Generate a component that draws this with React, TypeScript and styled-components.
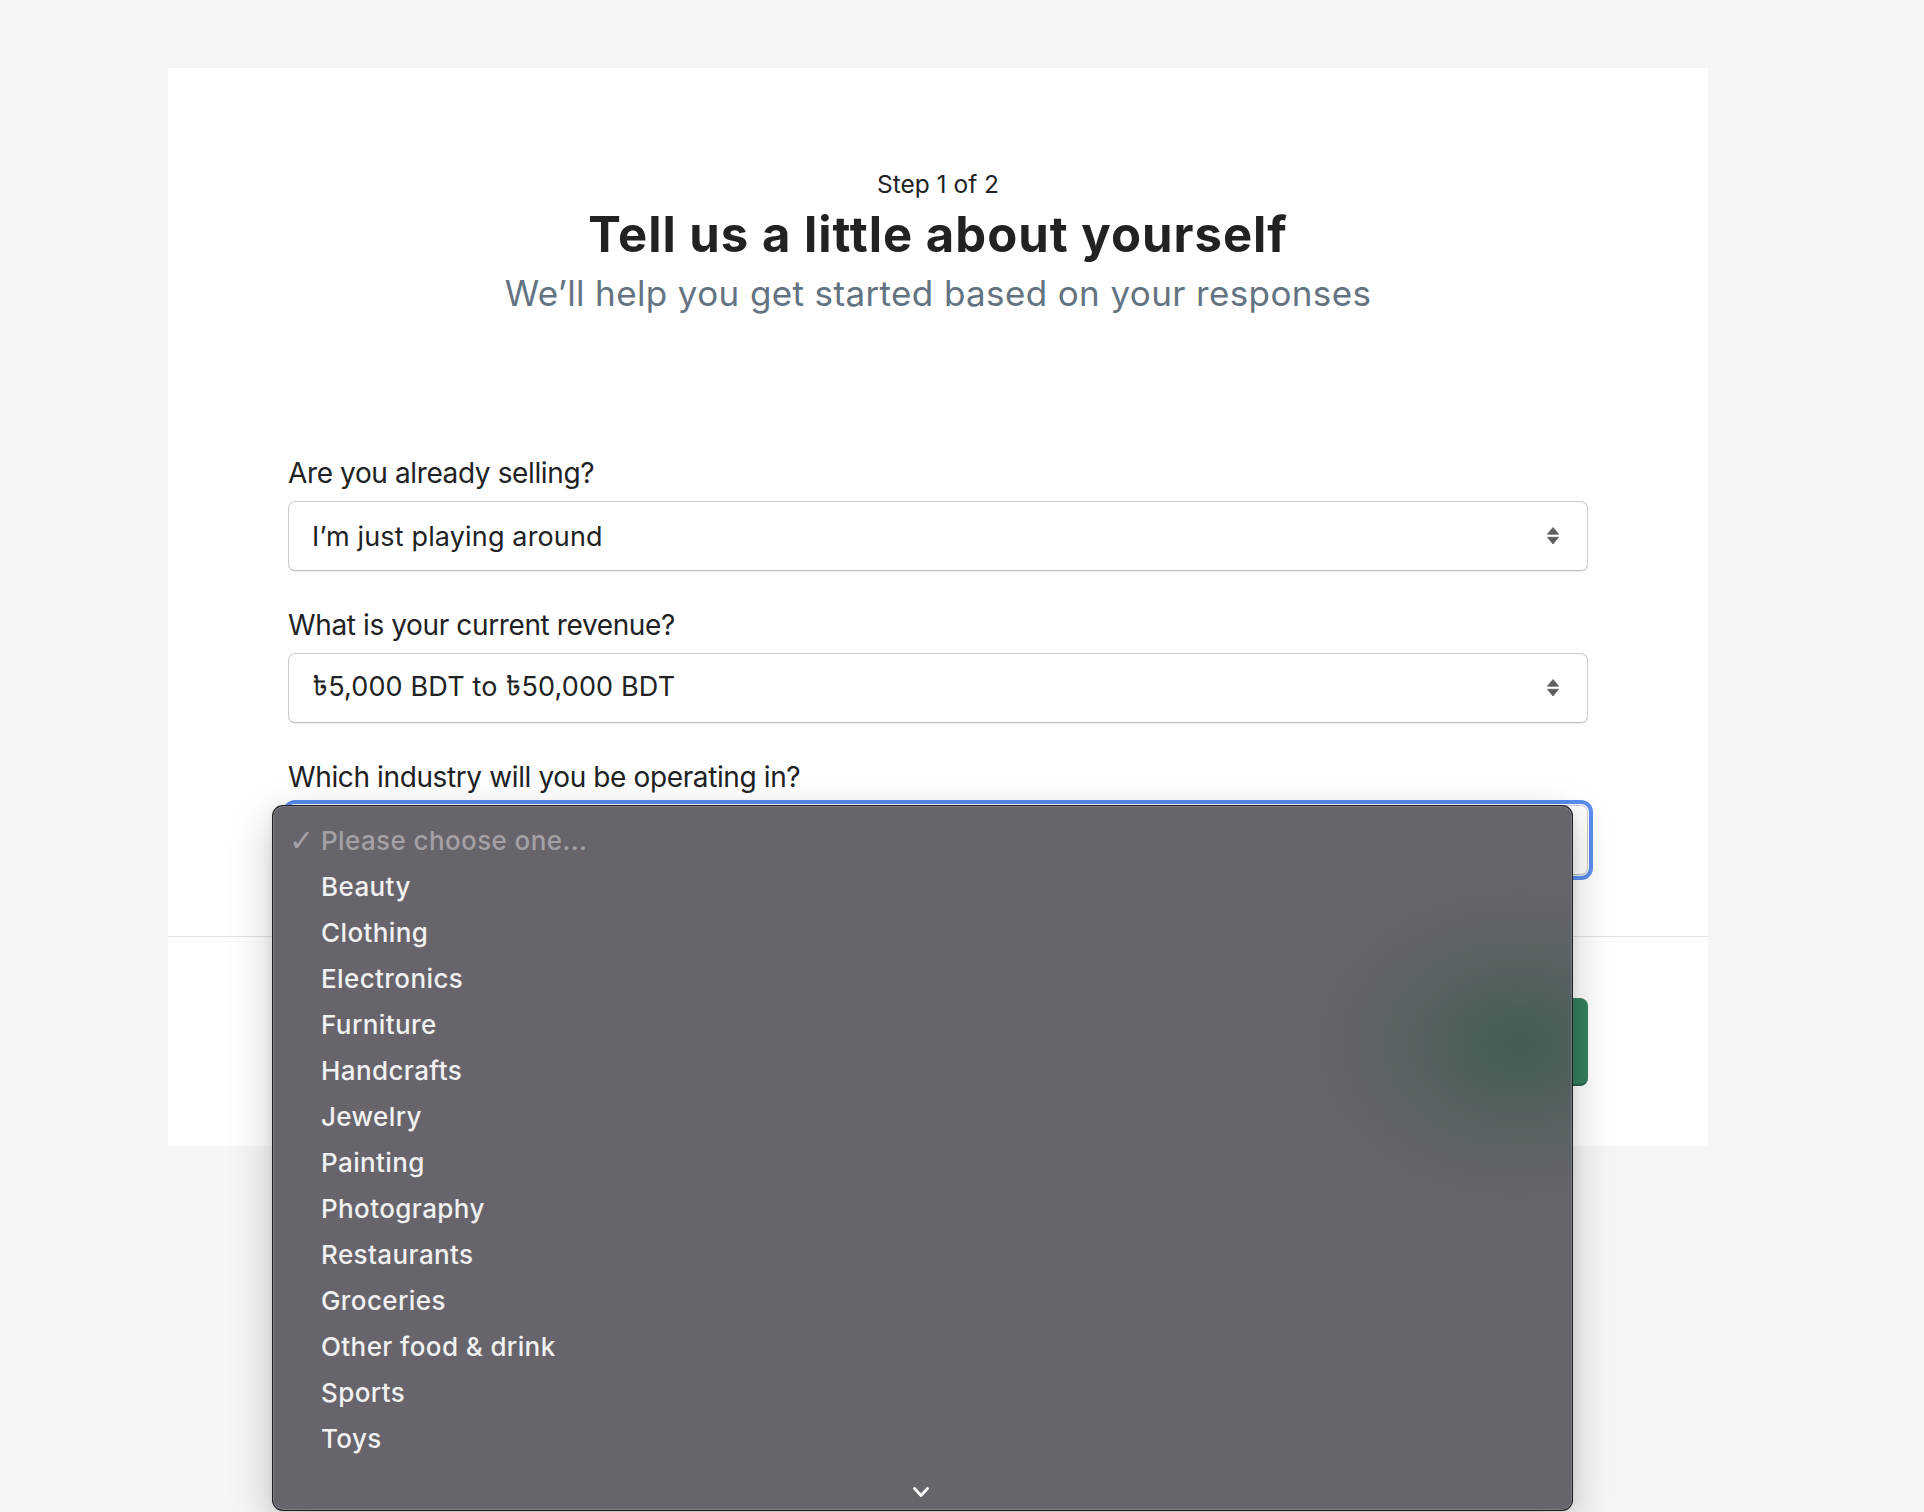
import React from "react";
import styled, { createGlobalStyle } from "styled-components";

const GlobalStyle = createGlobalStyle`
  html, body { margin: 0; padding: 0; background: #f6f6f7; }
  body {
    font-family: Inter, "Noto Sans", "Noto Sans Bengali", "DejaVu Sans", sans-serif;
    color: #202223;
  }
  * { box-sizing: border-box; }
`;

const Page = styled.div`
  min-height: 1512px;
  padding: 68px 0 0 168px;
  overflow: hidden;
`;

const Card = styled.main`
  width: 1540px;
  background: #ffffff;
`;

const Body = styled.section`
  padding: 99px 120px 61px;
`;

const Header = styled.header`
  text-align: center;
`;

const Step = styled.div`
  font-size: 24.5px;
  line-height: 34px;
  color: #202223;
`;

const Title = styled.h1`
  margin: 4px 0 0;
  font-size: 49px;
  line-height: 59px;
  font-weight: 700;
  color: #202223;
  letter-spacing: 1px;
`;

const Subtitle = styled.p`
  margin: 8px 0 0;
  font-size: 35px;
  line-height: 42px;
  color: #637381;
  letter-spacing: 0.38px;
`;

const Form = styled.div`
  margin-top: 139px;
  display: flex;
  flex-direction: column;
  gap: 34px;
`;

const Field = styled.div`
  position: relative;
  display: flex;
  flex-direction: column;
`;

const Label = styled.label`
  font-size: 28px;
  line-height: 40px;
  margin-bottom: 8px;
  color: #202223;
  letter-spacing: -0.38px;
`;

const SelectBox = styled.div<{ $focused?: boolean }>`
  height: 70px;
  display: flex;
  align-items: center;
  justify-content: space-between;
  padding: 0 28px 0 23px;
  border: 1.5px solid #c9cccf;
  border-bottom-color: #b9bdc1;
  border-radius: 7px;
  background: #fff;
  box-shadow: 0 1.5px 0 rgba(22, 29, 37, 0.06);
  font-size: 27px;
  letter-spacing: 0.15px;
  color: #202223;
  outline: ${(p) => (p.$focused ? "4.5px solid #5a8ef0" : "none")};
  outline-offset: 1px;
`;

const SelectValue = styled.span`
  white-space: nowrap;
`;

const Footer = styled.footer`
  border-top: 1px solid #dfe3e8;
  height: 210px;
  padding: 0 120px;
  display: flex;
  align-items: center;
  justify-content: flex-end;
`;

const PrimaryButton = styled.button`
  height: 88px;
  padding: 0 44px;
  border: none;
  border-radius: 8px;
  background: #36805f;
  box-shadow: inset 0 -2px 0 rgba(0, 0, 0, 0.2);
  color: #fff;
  font-family: inherit;
  font-size: 26px;
  font-weight: 600;
`;

const Menu = styled.div`
  position: absolute;
  top: 0;
  left: -16px;
  width: 1301px;
  height: 706px;
  border-radius: 11px;
  border: 1px solid rgba(20, 20, 22, 0.85);
  background:
    radial-gradient(ellipse 280px 215px at 1245px 238px,
      rgba(45, 84, 72, 0.6) 0%,
      rgba(55, 90, 80, 0.47) 25%,
      rgba(70, 95, 90, 0.28) 50%,
      rgba(90, 99, 100, 0.1) 75%,
      rgba(103, 101, 107, 0) 100%),
    #67656b;
  box-shadow:
    inset 0 0 0 1px rgba(255, 255, 255, 0.16),
    0 14px 44px rgba(0, 0, 0, 0.22),
    0 0 10px rgba(0, 0, 0, 0.08);
  padding-top: 12px;
  z-index: 10;
`;

const MenuItem = styled.div<{ $disabled?: boolean }>`
  height: 46px;
  line-height: 46px;
  display: flex;
  align-items: center;
  padding-left: 16px;
  font-size: 26px;
  font-weight: 500;
  letter-spacing: 0.4px;
  color: ${(p) => (p.$disabled ? "#a3a1a6" : "#f1f1f2")};
  white-space: nowrap;
`;

const Check = styled.span`
  width: 32px;
  font-family: "DejaVu Sans", sans-serif;
  font-size: 30px;
  color: #a3a1a6;
`;

const ScrollArrow = styled.div`
  position: absolute;
  left: 0;
  right: 4px;
  bottom: 12px;
  display: flex;
  justify-content: center;
`;

const UpDown = () => (
  <svg width="12" height="18" viewBox="0 0 12 18" aria-hidden>
    <path d="M6 0.5 L11.6 7.2 H0.4 Z" fill="#5c5f62" strokeLinejoin="round" stroke="#5c5f62" strokeWidth="0.8" />
    <path d="M0.4 10.3 H11.6 L6 17 Z" fill="#5c5f62" strokeLinejoin="round" stroke="#5c5f62" strokeWidth="0.8" />
  </svg>
);

const Chevron = () => (
  <svg width="18" height="12" viewBox="0 0 18 12" aria-hidden>
    <polyline points="2.5,2.5 9,9.5 15.5,2.5" fill="none" stroke="#ffffff" strokeWidth="2.8" strokeLinecap="round" strokeLinejoin="round" />
  </svg>
);

const industries = [
  "Beauty",
  "Clothing",
  "Electronics",
  "Furniture",
  "Handcrafts",
  "Jewelry",
  "Painting",
  "Photography",
  "Restaurants",
  "Groceries",
  "Other food & drink",
  "Sports",
  "Toys",
];

export default function App() {
  return (
    <>
      <GlobalStyle />
      <Page>
        <Card>
          <Body>
            <Header>
              <Step>Step 1 of 2</Step>
              <Title>Tell us a little about yourself</Title>
              <Subtitle>We’ll help you get started based on your responses</Subtitle>
            </Header>
            <Form>
              <Field>
                <Label>Are you already selling?</Label>
                <SelectBox>
                  <SelectValue>I’m just playing around</SelectValue>
                  <UpDown />
                </SelectBox>
              </Field>
              <Field>
                <Label>What is your current revenue?</Label>
                <SelectBox>
                  <SelectValue>৳5,000 BDT to ৳50,000 BDT</SelectValue>
                  <UpDown />
                </SelectBox>
              </Field>
              <Field>
                <Label>Which industry will you be operating in?</Label>
                <Field>
                  <SelectBox $focused>
                    <UpDown />
                  </SelectBox>
                  <Menu>
                    <MenuItem $disabled>
                      <Check>✓</Check>
                      Please choose one...
                    </MenuItem>
                    {industries.map((name) => (
                      <MenuItem key={name}>
                        <Check />
                        {name}
                      </MenuItem>
                    ))}
                    <ScrollArrow>
                      <Chevron />
                    </ScrollArrow>
                  </Menu>
                </Field>
              </Field>
            </Form>
          </Body>
          <Footer>
            <PrimaryButton>Next</PrimaryButton>
          </Footer>
        </Card>
      </Page>
    </>
  );
}
